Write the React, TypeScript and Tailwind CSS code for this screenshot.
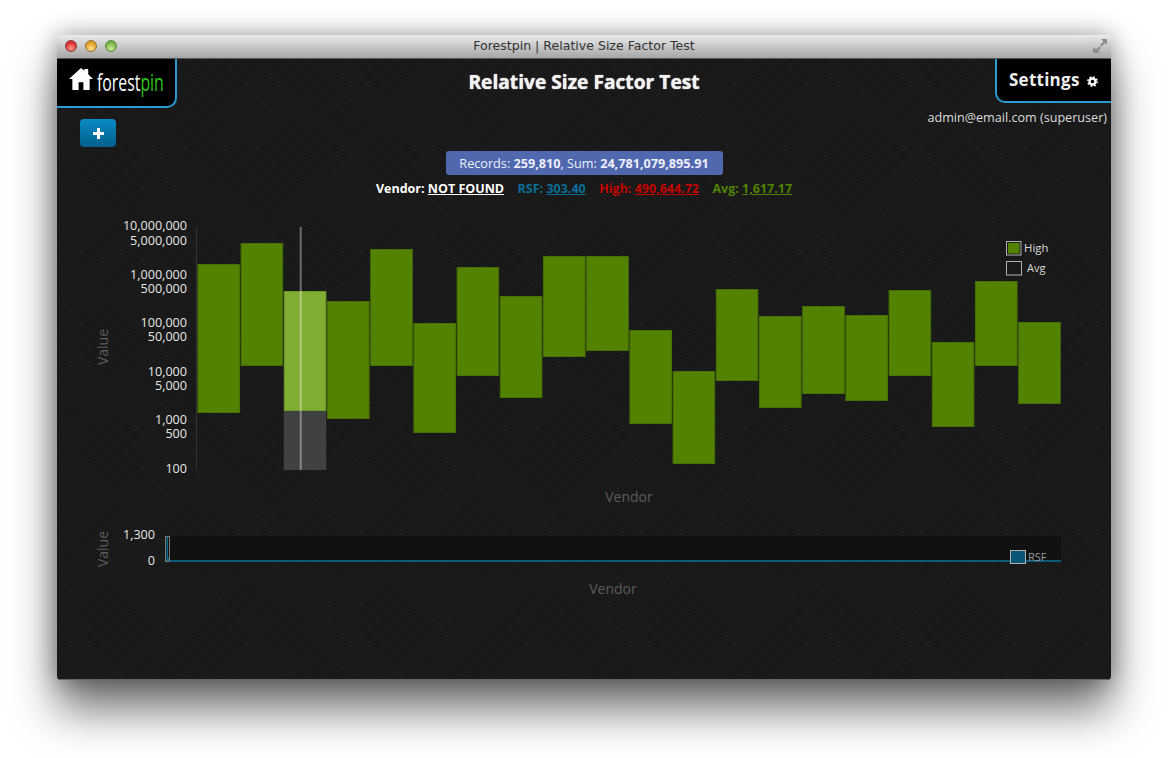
const bars = [
  [264, 413], [243, 366], [291, 411], [301, 419], [249, 366],
  [323, 433], [267, 376], [296, 398], [256, 357], [256, 351],
  [330, 424], [371, 464], [289, 381], [316, 408], [306, 394],
  [315, 401], [290, 376], [342, 427], [281, 366], [322, 404],
];

const ticks: [string, number][] = [
  ['10,000,000', 226], ['5,000,000', 240.5], ['1,000,000', 274.5], ['500,000', 288.5],
  ['100,000', 323], ['50,000', 337], ['10,000', 371.5], ['5,000', 385.5],
  ['1,000', 419.5], ['500', 434], ['100', 468.5],
];

// chart svg starts at y=215 on the page, x=57
const TOP = 215;
const LEFT = 57;

function TopChart() {
  return (
    <svg width="1054" height="295" className="block">
      <line x1={196.5 - LEFT} x2={196.5 - LEFT} y1={227 - TOP} y2={470 - TOP} stroke="#333" />
      {bars.map(([top, bottom], i) => {
        const x = 197.4 - LEFT + i * 43.2;
        const active = i === 2;
        return (
          <g key={i}>
            <rect
              x={x + 0.5}
              y={top - TOP + 0.5}
              width={41.6}
              height={bottom - top - 1}
              fill={active ? '#80ad33' : '#528200'}
              stroke={active ? '#6d9a25' : '#456f00'}
              strokeWidth="1"
            />
            {active && <rect x={x} y={bottom - TOP} width={42.4} height={470 - bottom} fill="#414141" />}
          </g>
        );
      })}
      <line x1={300.7 - LEFT} x2={300.7 - LEFT} y1={227 - TOP} y2={470 - TOP} stroke="#fff" strokeOpacity="0.36" strokeWidth="2" />
      {ticks.map(([label, y]) => (
        <text key={label} x={187 - LEFT} y={y - TOP + 4} textAnchor="end" fontSize="12.6" fill="#e4e8e4">
          {label}
        </text>
      ))}
      <text
        transform={`translate(${108 - LEFT},${347 - TOP}) rotate(-90)`}
        textAnchor="middle"
        fontSize="14"
        fill="#5c5c5c"
      >
        Value
      </text>
      <text x={629 - LEFT} y={502 - TOP} textAnchor="middle" fontSize="14" fill="#5c5c5c">
        Vendor
      </text>
      <rect x={1006.5 - LEFT} y={241.5 - TOP} width="14.5" height="13.5" fill="none" stroke="#b0b0b0" />
      <rect x={1008 - LEFT} y={243 - TOP} width="11.5" height="10.5" fill="#528200" />
      <text x={1024 - LEFT} y={252 - TOP} fontSize="11.4" fill="#d8d8d8">High</text>
      <rect x={1006.5 - LEFT} y={261.5 - TOP} width="15" height="13.5" fill="none" stroke="#b0b0b0" />
      <text x={1027 - LEFT} y={272 - TOP} fontSize="11" fill="#d8d8d8">Avg</text>
    </svg>
  );
}

function BottomChart() {
  const top = 525;
  return (
    <svg width="1054" height="80" className="block">
      <rect x={166 - LEFT} y={536 - top} width={895} height={26} fill="#111" />
      <line x1={166 - LEFT} x2={1061 - LEFT} y1={561 - top} y2={561 - top} stroke="#0c5a78" strokeWidth="2" />
      <path d={`M${166.5 - LEFT} ${537 - top} L${168 - LEFT} ${537 - top} L${168 - LEFT} ${556 - top} Q${168.5 - LEFT} ${560 - top} ${171 - LEFT} ${561 - top} L${166.5 - LEFT} ${561 - top}Z`} fill="#0c6a8e" />
      <rect x={165.5 - LEFT} y={536.5 - top} width="4" height="25" fill="none" stroke="#777" />
      <text x={155 - LEFT} y={539 - top} textAnchor="end" fontSize="12.6" fill="#e4e8e4">1,300</text>
      <text x={155 - LEFT} y={565 - top} textAnchor="end" fontSize="12.6" fill="#e4e8e4">0</text>
      <text
        transform={`translate(${108 - LEFT},${549 - top}) rotate(-90)`}
        textAnchor="middle"
        fontSize="14"
        fill="#5c5c5c"
      >
        Value
      </text>
      <text x={613 - LEFT} y={594 - top} textAnchor="middle" fontSize="14" fill="#5c5c5c">
        Vendor
      </text>
      <rect x={1010.5 - LEFT} y={550.5 - top} width="15" height="13" fill="#0a5677" stroke="#b0b0b0" />
      <text x={1028 - LEFT} y={561 - top} fontSize="11" fill="#9a9a9a">RSF</text>
    </svg>
  );
}

export default function App() {
  return (
    <div className="h-[758px] w-[1168px] overflow-hidden bg-white pl-[57px] pt-[35px] font-['Open_Sans',sans-serif]">
      <div className="flex h-[645px] w-[1054px] flex-col overflow-hidden rounded-[4px] shadow-[0_30px_45px_rgba(0,0,0,0.55),0_0_24px_rgba(0,0,0,0.35)]">
        {/* title bar */}
        <div className="relative flex h-[24px] shrink-0 items-center justify-center border-b border-[#555] bg-gradient-to-b from-[#ebebeb] to-[#a6a6a6]">
          <div className="absolute left-[8px] top-[5px] flex gap-[8px]">
            <span className="h-[12px] w-[12px] rounded-full border border-[#8a3a3a] bg-[radial-gradient(circle_at_50%_75%,#ff9a90,#d8262a_70%)]" />
            <span className="h-[12px] w-[12px] rounded-full border border-[#94703a] bg-[radial-gradient(circle_at_50%_75%,#ffdf8a,#e09a20_70%)]" />
            <span className="h-[12px] w-[12px] rounded-full border border-[#5f8a48] bg-[radial-gradient(circle_at_50%_75%,#cbeca0,#6fae3c_70%)]" />
          </div>
          <span className="font-['DejaVu_Sans',sans-serif] text-[12.55px] text-[#333]">Forestpin | Relative Size Factor Test</span>
          <svg className="absolute right-[3px] top-[3px]" width="16" height="16" viewBox="0 0 16 16" fill="#8c8c8c">
            <path d="M9 1h6v6l-2-2-3.5 3.5-1.5-1.5L11.500 3.500zM1 9v6h7l-2-2 3-3-1.500-1.500L4 11.500z" />
          </svg>
        </div>

        {/* page */}
        <div className="flex flex-1 flex-col border-b border-[#666] bg-[#191919] bg-[repeating-linear-gradient(45deg,rgba(255,255,255,0.025)_0px,rgba(255,255,255,0.025)_1px,transparent_1px,transparent_3px),repeating-linear-gradient(-45deg,rgba(0,0,0,0.14)_0px,rgba(0,0,0,0.14)_1px,transparent_1px,transparent_3px)]">
          <div className="flex h-[49px] shrink-0 items-start justify-between">
            <div className="flex h-[49px] w-[120px] shrink-0 items-center gap-[4px] rounded-br-[10px] border-b-2 border-r-2 border-[#2a9ad0] bg-black pb-[2px] pl-[12px]">
              <svg className="mb-[6px] shrink-0" width="24" height="24" viewBox="0 0 25 25" fill="#fff">
                <path d="M12.500 1 L16 4 V2 H20 V7.500 L25 12.500 H21.500 V24 H15 V16 H10 V24 H3.500 V12.500 H0 Z" />
              </svg>
              <span className="w-[66px] origin-left scale-x-[0.66] whitespace-nowrap text-[24px] leading-none text-white">
                forest<span className="text-[#2fc21c]">pin</span>
              </span>
            </div>
            <h1 className="mr-[4px] mt-[8px] text-[19.2px] font-bold leading-[30px] text-[#f2f2f2] [text-shadow:0_0_1px_#fff]">Relative Size Factor Test</h1>
            <div className="flex h-[44px] w-[116px] shrink-0 items-center gap-[7px] rounded-bl-[10px] border-b-2 border-l-2 border-[#2a9ad0] bg-black pl-[12px]">
              <span className="text-[17px] font-bold tracking-[0.25px] text-[#eee]">Settings</span>
              <svg className="mt-[2px]" width="11" height="11" viewBox="0 0 11 11">
                <circle cx="5.500" cy="5.500" r="3" fill="none" stroke="#fff" strokeWidth="2.400" />
                <circle cx="5.500" cy="5.500" r="4.700" fill="none" stroke="#fff" strokeWidth="1.400" strokeDasharray="1.900 1.790" />
              </svg>
            </div>
          </div>

          <div className="flex h-[43px] shrink-0 items-start justify-between pl-[23px] pr-[4px]">
            <button className="mt-[11px] flex h-[28px] w-[36px] items-center justify-center rounded-[4px] bg-gradient-to-b from-[#0a8bc4] to-[#045f8c]">
              <svg width="11" height="11" viewBox="0 0 11 11" fill="#fff">
                <path d="M4 0h3v4h4v3H7v4H4V7H0V4h4z" />
              </svg>
            </button>
            <span className="text-[12.6px] leading-[20px] text-[#ddd]">admin@email.com (superuser)</span>
          </div>

          <div className="flex flex-col items-center">
            <div className="flex h-[24px] w-[277px] items-center justify-center rounded-[3px] bg-[#4f68ae] text-[12.66px] text-[#eef]">
              <span>
                Records: <b>259,810</b>, Sum: <b>24,781,079,895.91</b>
              </span>
            </div>
            <div className="mt-[5px] flex h-[18px] gap-[13.500px] text-[12.500px] font-bold leading-[18px]">
              <span className="text-white">
                Vendor: <span className="underline">NOT FOUND</span>
              </span>
              <span className="text-[#0a6d96]">
                RSF: <span className="underline">303.40</span>
              </span>
              <span className="text-[#c40000]">
                High: <span className="underline">490,644.72</span>
              </span>
              <span className="text-[#528200]">
                Avg: <span className="underline">1,617.17</span>
              </span>
            </div>
          </div>

          <div className="mt-[17px]">
            <TopChart />
          </div>
          <div className="mt-[15px]">
            <BottomChart />
          </div>
        </div>
      </div>
    </div>
  );
}
